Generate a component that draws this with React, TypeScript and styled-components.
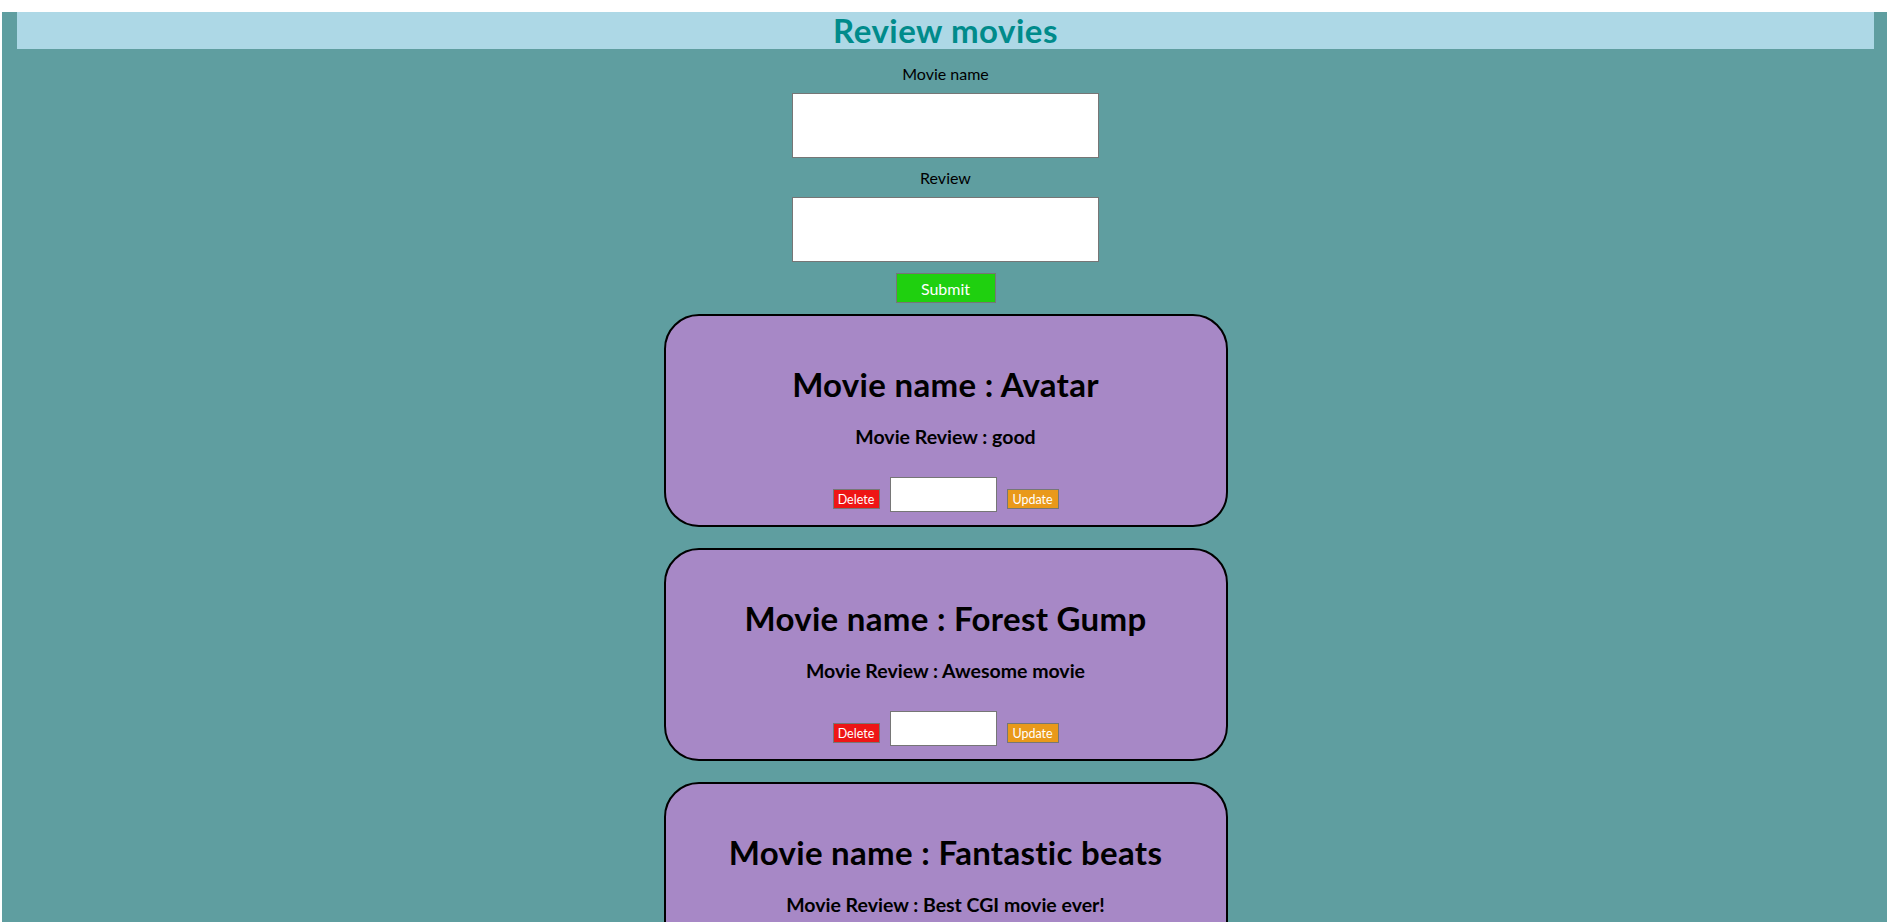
import React from "react";
import styled, { createGlobalStyle } from "styled-components";

const GlobalStyle = createGlobalStyle`
  html, body {
    margin: 0;
    background: #ffffff;
    overflow-x: hidden;
  }
  body {
    font-family: "Lato", "Open Sans", sans-serif;
  }
`;

const movies = [
  { name: "Avatar", review: "good" },
  { name: "Forest Gump", review: "Awesome movie" },
  { name: "Fantastic beats", review: "Best CGI movie ever!" }
];

const Page = styled.div`
  width: 100%;
  min-height: 910px;
  margin: 12px 0 0 2px;
  padding-bottom: 40px;
  background: #5f9ea0;
  display: flex;
  flex-direction: column;
  align-items: center;
`;

const Header = styled.div`
  align-self: stretch;
  margin: 0 15px;
  height: 37px;
  background: #add8e6;
  display: flex;
  justify-content: center;
  align-items: center;
`;

const Title = styled.h1`
  margin: 0;
  font-size: 33px;
  line-height: 37px;
  letter-spacing: 0.5px;
  font-weight: 700;
  color: #008b8b;
`;

const Form = styled.div`
  display: flex;
  flex-direction: column;
  align-items: center;
  margin-top: 15px;
`;

const Label = styled.label<{ $top?: number }>`
  margin-top: ${({ $top }) => $top ?? 0}px;
  font-size: 16px;
  line-height: 19px;
  color: #000000;
`;

const BigInput = styled.input`
  box-sizing: border-box;
  width: 307px;
  height: 65px;
  margin-top: 10px;
  border: 1px solid #767676;
  background: #ffffff;
`;

const SubmitButton = styled.button`
  box-sizing: border-box;
  width: 100px;
  height: 30px;
  margin: 11px 0;
  border: 1px solid #767676;
  background: #1fd00f;
  color: #ffffff;
  font-family: inherit;
  font-size: 16px;
`;

const Cards = styled.div`
  display: flex;
  flex-direction: column;
  align-items: center;
  gap: 21px;
`;

const Card = styled.div`
  box-sizing: border-box;
  width: 564px;
  padding: 50px 0 13px;
  border: 2px solid #000000;
  border-radius: 35px;
  background: #a788c6;
  text-align: center;
`;

const CardTitle = styled.h1`
  margin: 0;
  font-size: 33px;
  line-height: 37px;
  letter-spacing: 0.3px;
  font-weight: 700;
  color: #000000;
`;

const CardReview = styled.h3`
  margin: 23px 0 0;
  font-size: 19.5px;
  line-height: 22px;
  font-weight: 700;
  color: #000000;
`;

const Actions = styled.div`
  display: flex;
  justify-content: center;
  align-items: flex-start;
  gap: 10px;
  margin-top: 29px;
`;

const SmallButton = styled.button<{ $color: string; $width: number }>`
  box-sizing: border-box;
  width: ${({ $width }) => $width}px;
  height: 20px;
  margin-top: 12px;
  padding: 0;
  border: 1px solid #767676;
  background: ${({ $color }) => $color};
  color: #ffffff;
  font-family: inherit;
  font-size: 12.5px;
`;

const UpdateInput = styled.input`
  box-sizing: border-box;
  width: 107px;
  height: 35px;
  border: 1px solid #767676;
  background: #ffffff;
`;

const App: React.FC = () => (
  <>
    <GlobalStyle />
    <Page>
      <Header>
        <Title>Review movies</Title>
      </Header>
      <Form>
        <Label>Movie name</Label>
        <BigInput type="text" />
        <Label $top={10}>Review</Label>
        <BigInput type="text" />
        <SubmitButton>Submit</SubmitButton>
      </Form>
      <Cards>
        {movies.map(movie => (
          <Card key={movie.name}>
            <CardTitle>Movie name : {movie.name}</CardTitle>
            <CardReview>Movie Review : {movie.review}</CardReview>
            <Actions>
              <SmallButton $color="#ee1515" $width={47}>
                Delete
              </SmallButton>
              <UpdateInput type="text" />
              <SmallButton $color="#e9991a" $width={52}>
                Update
              </SmallButton>
            </Actions>
          </Card>
        ))}
      </Cards>
    </Page>
  </>
);

export default App;
